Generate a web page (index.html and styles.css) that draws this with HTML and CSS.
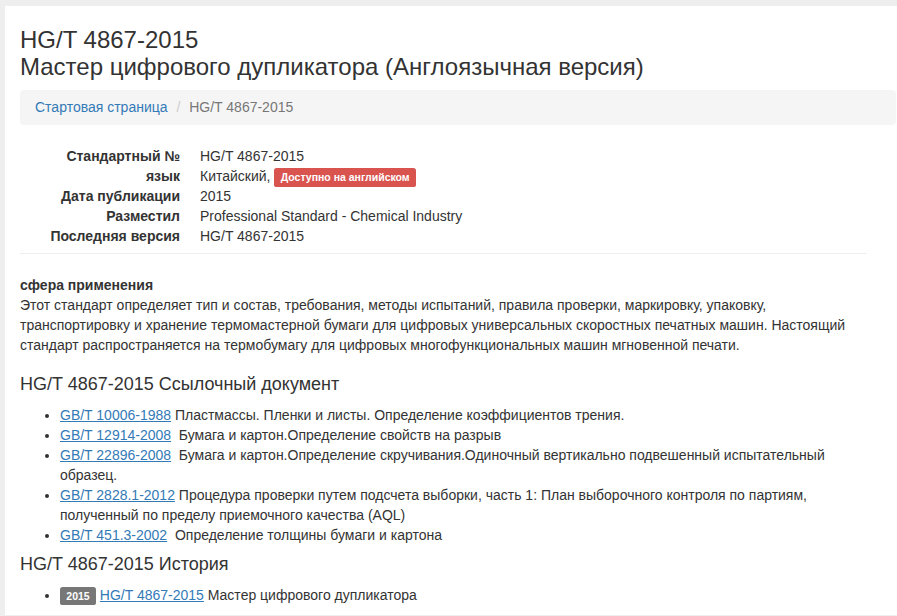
FILE: index.html
```html
<!DOCTYPE html>
<html lang="ru">
  <head>
    <meta charset="UTF-8" />
    <meta name="viewport" content="width=device-width, initial-scale=1.0" />
    <title>HG/T 4867-2015</title>
    <link rel="stylesheet" href="styles.css">
  </head>
  <body>
    <section class="page">
      <h1 class="page__title">
        HG/T 4867-2015<br />
        Мастер цифрового дупликатора (Англоязычная версия)
      </h1>

      <ol class="breadcrumb">
        <li><a href="#">Стартовая страница</a></li>
        <li class="breadcrumb__active">HG/T 4867-2015</li>
      </ol>

      <div class="content">
        <dl class="info">
          <dt>Стандартный №</dt>
          <dd>HG/T 4867-2015</dd>
          <dt>язык</dt>
          <dd>Китайский, <span class="label label--danger">Доступно на английском</span></dd>
          <dt>Дата публикации</dt>
          <dd>2015</dd>
          <dt>Разместил</dt>
          <dd>Professional Standard - Chemical Industry</dd>
          <dt>Последняя версия</dt>
          <dd>HG/T 4867-2015</dd>
        </dl>

        <hr />

        <div class="scope">
          <strong>сфера применения</strong>
          <p>Этот стандарт определяет тип и состав, требования, методы испытаний, правила проверки, маркировку, упаковку, транспортировку и хранение термомастерной бумаги для цифровых универсальных скоростных печатных машин. Настоящий стандарт распространяется на термобумагу для цифровых многофункциональных машин мгновенной печати.</p>
        </div>

        <h4>HG/T 4867-2015 Ссылочный документ</h4>
        <ul class="list">
          <li><a href="#">GB/T 10006-1988</a> Пластмассы. Пленки и листы. Определение коэффициентов трения.</li>
          <li><a href="#">GB/T 12914-2008</a>&nbsp; Бумага и картон.Определение свойств на разрыв</li>
          <li><a href="#">GB/T 22896-2008</a>&nbsp; Бумага и картон.Определение скручивания.Одиночный вертикально подвешенный испытательный образец.</li>
          <li><a href="#">GB/T 2828.1-2012</a> Процедура проверки путем подсчета выборки, часть 1: План выборочного контроля по партиям, полученный по пределу приемочного качества (AQL)</li>
          <li><a href="#">GB/T 451.3-2002</a>&nbsp; Определение толщины бумаги и картона</li>
        </ul>

        <h4>HG/T 4867-2015 История</h4>
        <ul class="list">
          <li><span class="label label--default">2015</span> <a href="#">HG/T 4867-2015</a> Мастер цифрового дупликатора</li>
        </ul>
      </div>
    </section>
  </body>
</html>
```

FILE: styles.css
```css
* {
  box-sizing: border-box;
}
html {
  font-family: "Liberation Sans", Arial, sans-serif;
}
body {
  margin: 0;
  background-color: #eeeeee;
  color: #333333;
  font-size: 14px;
  line-height: 20px;
}
a {
  color: #337ab7;
  text-decoration: underline;
}

.page {
  margin: 6px 0 0 5px;
  padding: 20px 1px 0 15px;
  background-color: #ffffff;
  overflow: hidden;
}
.page__title {
  margin: 0 0 10px;
  font-size: 24px;
  font-weight: 400;
  line-height: 27px;
}

.breadcrumb {
  list-style: none;
  margin: 0 0 21px;
  padding: 8px 15px;
  background-color: #f5f5f5;
  border-radius: 4px;
  line-height: 19px;
}
.breadcrumb li {
  display: inline;
}
.breadcrumb a {
  text-decoration: none;
}
.breadcrumb li + li::before {
  content: "/\00a0";
  padding: 0 5px;
  color: #cccccc;
}
.breadcrumb__active {
  color: #777777;
}

.content {
  width: 847px;
}

.info {
  display: grid;
  grid-template-columns: 160px 1fr;
  column-gap: 20px;
  margin: 0 0 7px;
}
.info dt {
  font-weight: bold;
  text-align: right;
}
.info dd {
  margin: 0;
}

.label {
  display: inline;
  padding: 0.25em 0.6em 0.35em;
  font-size: 75%;
  font-weight: bold;
  line-height: 1;
  color: #ffffff;
  border-radius: 0.25em;
  vertical-align: baseline;
}
.label--danger {
  background-color: #d9534f;
}
.label--default {
  background-color: #777777;
}

hr {
  margin: 0 0 21px;
  border: 0;
  border-top: 1px solid #eeeeee;
}

.scope {
  padding-bottom: 10px;
}
.scope p {
  margin: 0;
}

h4 {
  margin: 10px 0;
  font-size: 18px;
  font-weight: 400;
  line-height: 1.1;
}

.list {
  margin: 0 0 10px;
  padding-left: 40px;
}
```
